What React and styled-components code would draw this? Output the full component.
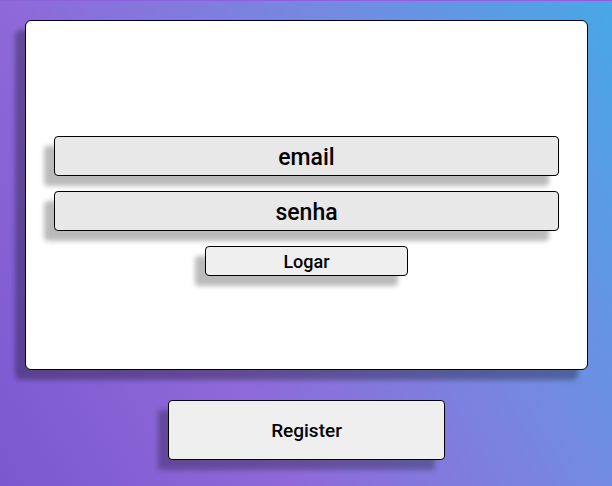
import React from "react";
import styled, { createGlobalStyle } from "styled-components";

const GlobalStyle = createGlobalStyle`
  html, body {
    margin: 0;
    padding: 0;
  }
  body {
    width: 612px;
    height: 486px;
    overflow: hidden;
    border-top: 1px solid #8a63d8;
    box-sizing: border-box;
    background: linear-gradient(
      60deg,
      #7a58cf 0%,
      #8f69d9 33%,
      #7589e0 66%,
      #48a8e6 100%
    );
    font-family: Roboto, "Liberation Sans", Arial, sans-serif;
    font-weight: 500;
  }
`;

const Page = styled.div`
  display: flex;
  flex-direction: column;
  align-items: center;
  padding: 19px 24px 0 25px;
`;

const Card = styled.div`
  box-sizing: border-box;
  width: 563px;
  height: 350px;
  background: #fff;
  border: 1px solid #000;
  border-radius: 6px;
  box-shadow: -10px 10px 5px rgba(0, 0, 0, 0.3);
  display: flex;
  flex-direction: column;
  align-items: center;
  justify-content: center;
  gap: 15px;
  padding-top: 21px;
`;

const Field = styled.div`
  box-sizing: border-box;
  width: 505px;
  height: 40px;
  padding-top: 3px;
  background: #e8e8e8;
  border: 1px solid #000;
  border-radius: 4px;
  box-shadow: -10px 10px 5px rgba(0, 0, 0, 0.27);
  display: flex;
  align-items: center;
  justify-content: center;
  font-size: 23px;
  color: #000;
`;

const Button = styled.button`
  box-sizing: border-box;
  width: ${({ wide }) => (wide ? "277px" : "203px")};
  height: ${({ wide }) => (wide ? "60px" : "30px")};
  background: #efefef;
  border: 1px solid #000;
  border-radius: 4px;
  box-shadow: -10px 10px 5px rgba(0, 0, 0, 0.27);
  font-family: inherit;
  font-weight: 500;
  font-size: ${({ wide }) => (wide ? "19px" : "18px")};
  color: #000;
  padding: ${({ wide }) => (wide ? "0" : "1px 0 0")};
  cursor: pointer;
`;

const Footer = styled.div`
  margin-top: 30px;
`;

export default function App() {
  return (
    <>
      <GlobalStyle />
      <Page>
        <Card>
          <Field>email</Field>
          <Field>senha</Field>
          <Button>Logar</Button>
        </Card>
        <Footer>
          <Button wide>Register</Button>
        </Footer>
      </Page>
    </>
  );
}
